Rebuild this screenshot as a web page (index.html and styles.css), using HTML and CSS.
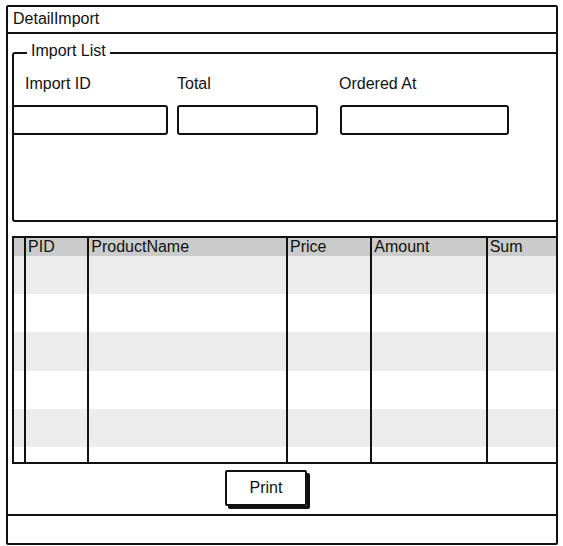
FILE: index.html
```html
<!DOCTYPE html>
<html>
<head>
<meta charset="utf-8">
<link rel="stylesheet" href="styles.css">
</head>
<body>
<div class="window">
  <div class="titlebar">DetailImport</div>
  <div class="content">
    <div class="group">
      <span class="legend">Import List</span>
      <div class="fields">
        <div class="field f1">
          <div class="label">Import ID</div>
          <div class="input"></div>
        </div>
        <div class="field f2">
          <div class="label">Total</div>
          <div class="input"></div>
        </div>
        <div class="field f3">
          <div class="label">Ordered At</div>
          <div class="input"></div>
        </div>
      </div>
    </div>
    <table class="grid">
      <colgroup>
        <col class="c0"><col class="c1"><col class="c2"><col class="c3"><col class="c4"><col class="c5">
      </colgroup>
      <tr class="head"><td></td><td>PID</td><td>ProductName</td><td>Price</td><td>Amount</td><td>Sum</td></tr>
      <tr class="row odd"><td></td><td></td><td></td><td></td><td></td><td></td></tr>
      <tr class="row"><td></td><td></td><td></td><td></td><td></td><td></td></tr>
      <tr class="row odd"><td></td><td></td><td></td><td></td><td></td><td></td></tr>
      <tr class="row"><td></td><td></td><td></td><td></td><td></td><td></td></tr>
      <tr class="row odd"><td></td><td></td><td></td><td></td><td></td><td></td></tr>
      <tr class="row last"><td></td><td></td><td></td><td></td><td></td><td></td></tr>
    </table>
    <div class="actions">
      <div class="button">Print</div>
    </div>
  </div>
  <div class="statusbar"></div>
</div>
</body>
</html>
```
FILE: styles.css
```css
* { box-sizing: border-box; }
html, body { margin: 0; padding: 0; background: #fff; }
body {
  font-family: "Liberation Sans", Arial, sans-serif;
  font-size: 16px;
  color: #111;
}
.window {
  margin: 5px 0 0 6px;
  width: 552px;
  height: 540px;
  border: 2px solid #111;
  border-radius: 2px;
  display: flex;
  flex-direction: column;
}
.titlebar {
  height: 27px;
  border-bottom: 2px solid #111;
  padding: 3px 0 0 5px;
  line-height: 18px;
}
.content {
  flex: 1;
  display: flex;
  flex-direction: column;
  padding-left: 4px;
}
.group {
  position: relative;
  margin-top: 18px;
  margin-right: -2px;
  height: 170px;
  border: 2px solid #111;
  border-radius: 3px;
}
.legend {
  position: absolute;
  left: 13px;
  top: -12px;
  background: #fff;
  padding: 0 4px 0 4px;
  line-height: 18px;
}
.fields {
  display: flex;
  padding-top: 21px;
}
.field { display: flex; flex-direction: column; }
.label { line-height: 18px; height: 18px; margin-bottom: 12px; }
.input {
  height: 30px;
  border: 2px solid #111;
  border-radius: 3px;
}
.f1 { margin-left: -2px; width: 156px; }
.f1 .label { padding-left: 13px; }
.f2 { margin-left: 9px; width: 141px; }
.f3 { margin-left: 22px; width: 169px; }
.f3 .label { margin-left: -1px; }
.grid {
  margin-top: 14px;
  margin-right: -2px;
  width: 546px;
  height: 228px;
  border-collapse: collapse;
  border: 2px solid #111;
  table-layout: fixed;
}
.grid td {
  border-left: 2px solid #111;
  padding: 0 0 0 2px;
  vertical-align: top;
  line-height: 18px;
}
.grid td:first-child { border-left: none; }
.c0 { width: 12px; }
.c1 { width: 63px; }
.c2 { width: 198px; }
.c3 { width: 84px; }
.c4 { width: 115px; }
.c5 { width: 70px; }
.head td { background: #cbcbcb; height: 18px; }
.row td { height: 38px; }
.row.odd td { background: #ececec; }
.row.last td { height: 16px; }
.actions {
  height: 50px;
  display: flex;
  align-items: flex-start;
  padding-top: 6px;
}
.button {
  margin-left: 213px;
  width: 82px;
  height: 36px;
  border: 2px solid #111;
  border-radius: 2px;
  box-shadow: 3px 3px 0 #111;
  display: flex;
  align-items: center;
  justify-content: center;
}
.statusbar {
  height: 29px;
  border-top: 2px solid #111;
}
```
